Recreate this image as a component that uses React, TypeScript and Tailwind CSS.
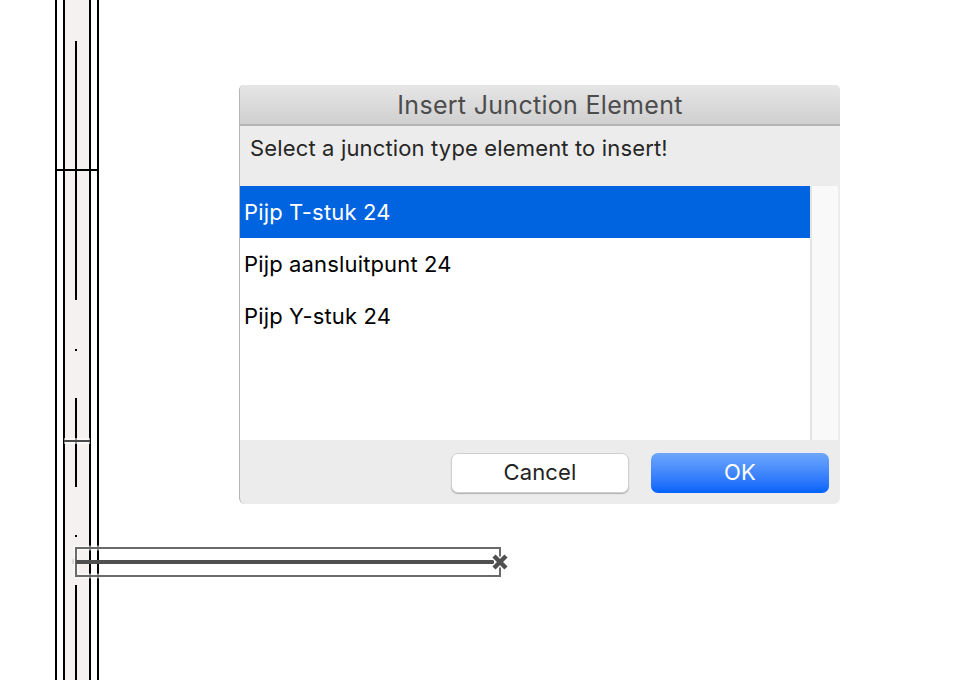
import React from 'react';

const items = ['Pijp T-stuk 24', 'Pijp aansluitpunt 24', 'Pijp Y-stuk 24'];

function Drawing() {
  return (
    <svg width="970" height="680" viewBox="0 0 970 680" className="absolute left-0 top-0">
      <rect x="65" y="0" width="25" height="680" fill="#f4f1f0" />
      <g fill="#000">
        <rect x="55" y="0" width="2" height="680" />
        <rect x="63" y="0" width="2" height="680" />
        <rect x="89" y="0" width="2" height="680" />
        <rect x="97" y="0" width="2" height="680" />
        <rect x="56" y="169" width="42" height="2" />
        <rect x="75" y="41" width="2" height="259" />
        <rect x="75" y="349" width="2" height="2" />
        <rect x="75" y="398" width="2" height="89" />
        <rect x="75" y="535" width="2" height="2" />
        <rect x="75" y="585" width="2" height="95" />
      </g>
      <rect x="64" y="438" width="26" height="6" fill="#fff" fillOpacity="0.6" />
      <rect x="64" y="440" width="26" height="2" fill="#4a4a4a" />
      {/* selected segment */}
      <rect x="76" y="548" width="424" height="28" fill="none" stroke="#fff" strokeOpacity="0.55" strokeWidth="5" />
      <rect x="76" y="548" width="424" height="28" fill="none" stroke="#6a6a6a" strokeWidth="2" />
      <rect x="72" y="559" width="2" height="5" fill="#d8d8d8" />
      <rect x="76" y="560" width="418" height="4" fill="#4f4f4f" />
      <path d="M494 556 L506 568 M506 556 L494 568" stroke="#fff" strokeWidth="7" fill="none" />
      <path d="M494 556 L506 568 M506 556 L494 568" stroke="#4f4f4f" strokeWidth="4.5" fill="none" />
    </svg>
  );
}

export default function App() {
  return (
    <div className="relative w-[970px] h-[680px] bg-white overflow-hidden font-['Inter',sans-serif]">
      <Drawing />

      <div className="absolute left-[239px] top-[85px] w-[601px] h-[419px] flex flex-col bg-[#ececec] rounded-t-[5px] rounded-b-[6px] border-l border-l-[#b5b5b5] overflow-hidden">
        <div className="h-[41px] shrink-0 pt-[2px] flex items-center justify-center bg-gradient-to-b from-[#e6e6e6] to-[#cfcfcf] border-b-2 border-b-[#b4b4b4] text-[25px] tracking-[0.3px] text-[#4d4d4d]">
          Insert Junction Element
        </div>
        <div className="h-[60px] shrink-0 pl-[10px] pt-[7px] text-[22px] tracking-[0.15px] leading-[30px] text-[#262626]">
          Select a junction type element to insert!
        </div>
        <div className="h-[254px] shrink-0 flex bg-white mr-[2px]">
          <ul className="w-[572px] border-r-2 border-r-[#e4e4e4]">
            {items.map((item, i) => (
              <li
                key={item}
                className={`h-[52px] flex items-center pl-[4px] pt-[1px] text-[22px] tracking-[0.15px] ${i === 0 ? 'bg-[#0064e1] text-white' : 'text-black'}`}
              >
                {item}
              </li>
            ))}
          </ul>
          <div className="flex-1 bg-[#f9f9f9]" />
        </div>
        <div className="flex-1 flex justify-end gap-[22px] pt-[13px] pr-[11px]">
          <button className="w-[178px] h-[40px] pb-[2px] rounded-[7px] bg-white border border-[#cfcfcf] shadow-[0_1px_1px_rgba(0,0,0,0.25)] text-[22px] tracking-[0.15px] text-[#222]">
            Cancel
          </button>
          <button className="w-[178px] h-[40px] pb-[2px] rounded-[7px] bg-gradient-to-b from-[#6ea6fb] to-[#0062fb] text-[22px] tracking-[0.15px] text-white">
            OK
          </button>
        </div>
      </div>
    </div>
  );
}
